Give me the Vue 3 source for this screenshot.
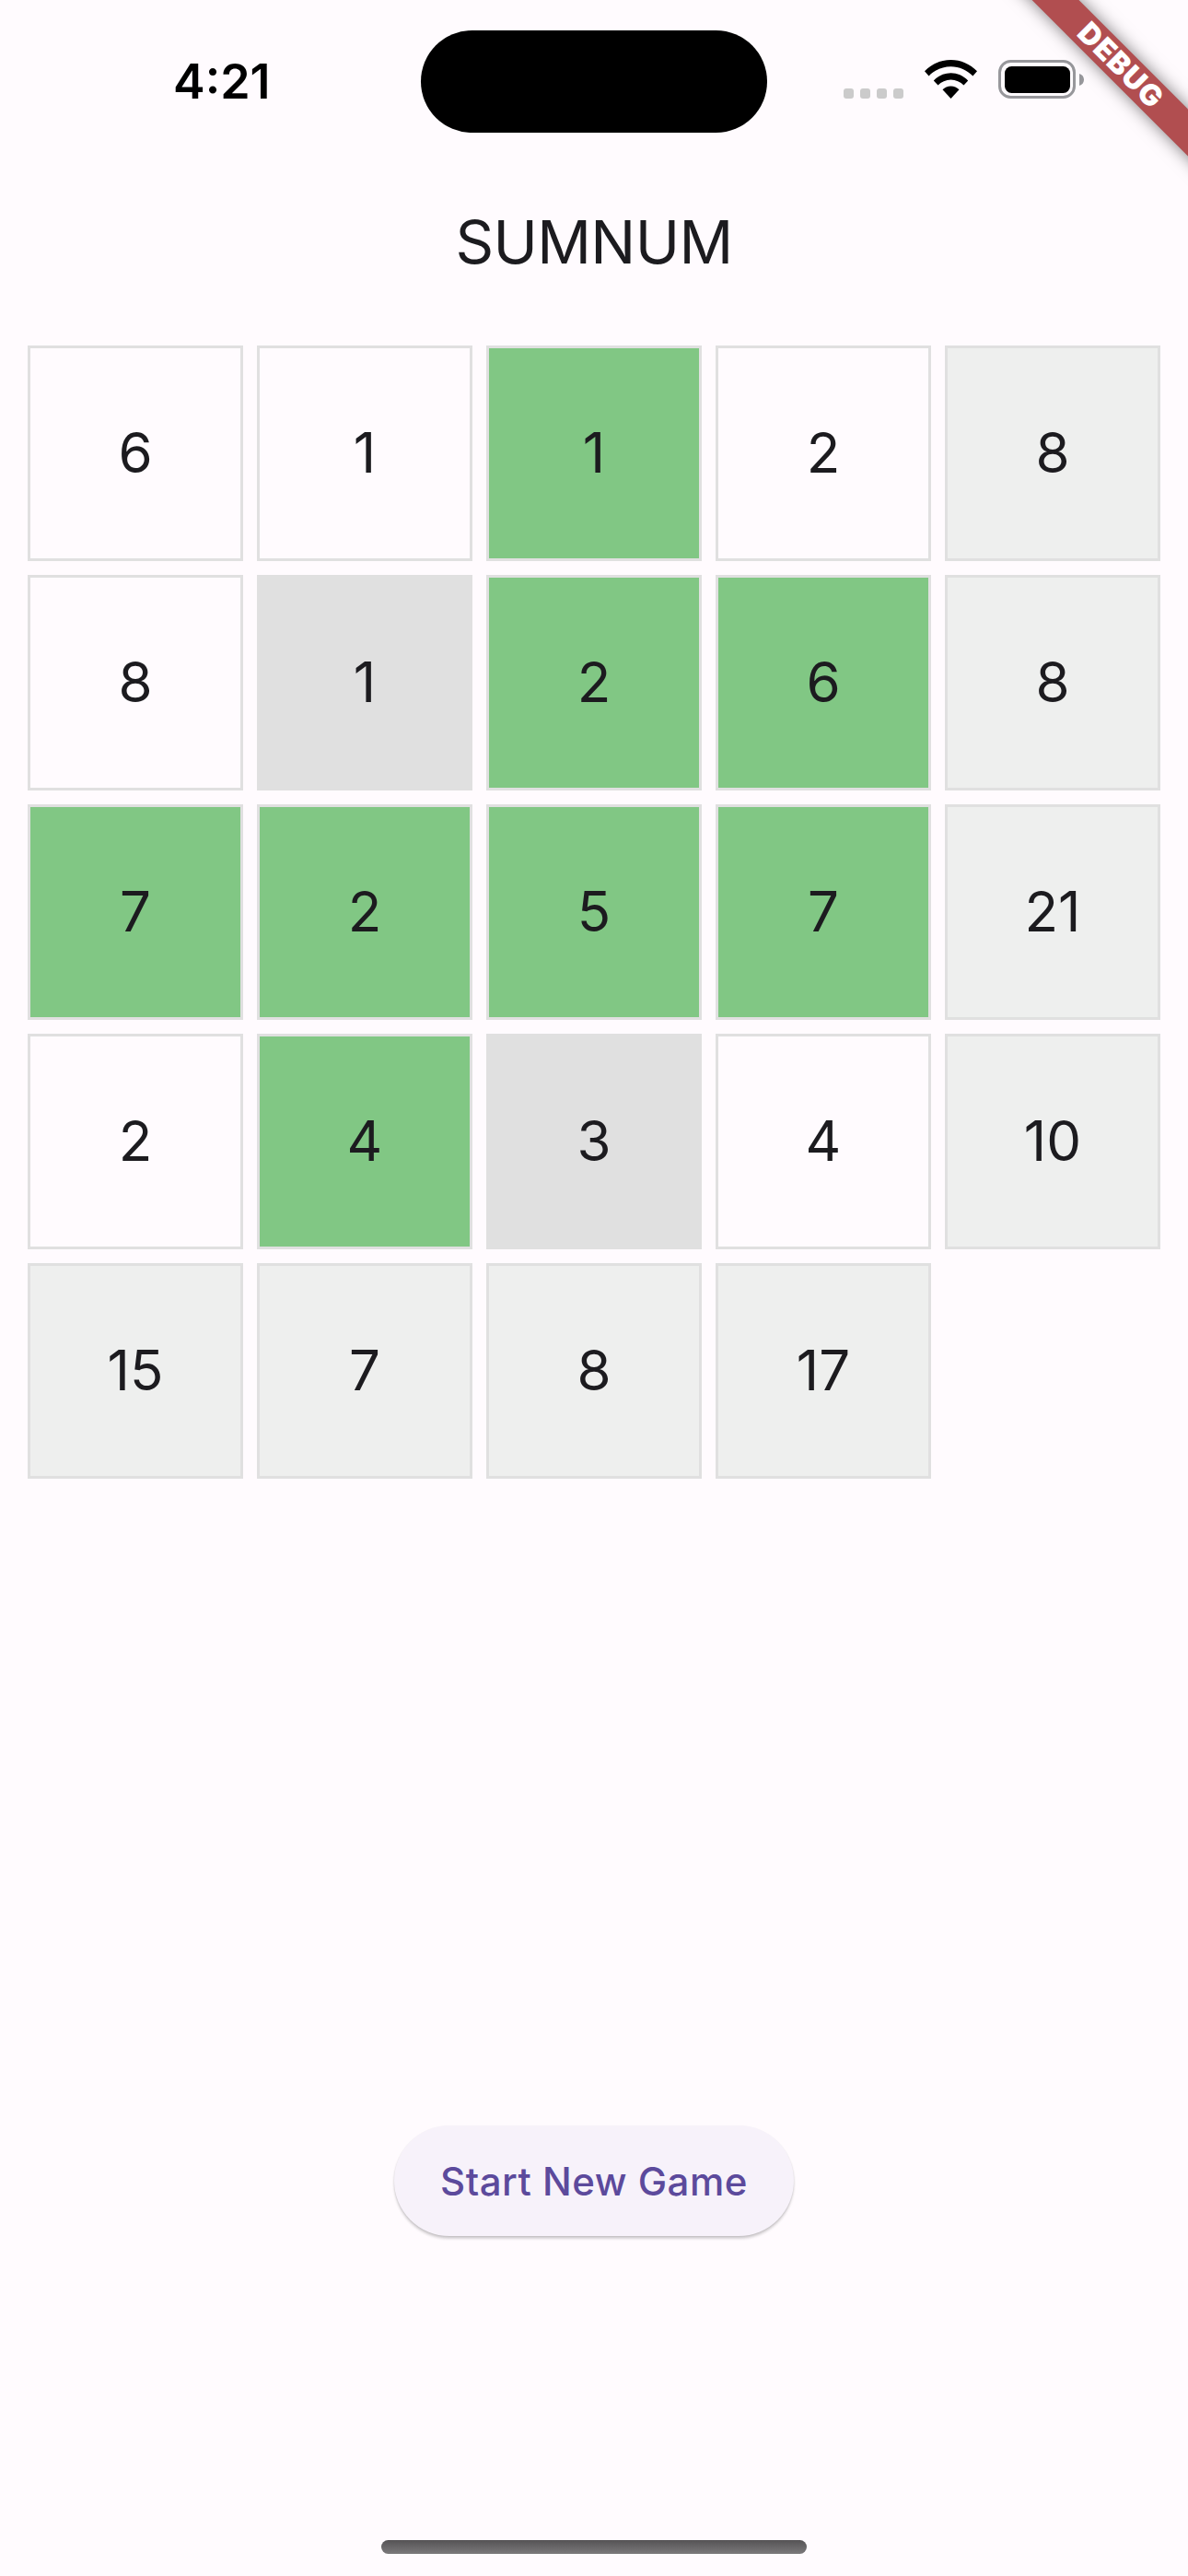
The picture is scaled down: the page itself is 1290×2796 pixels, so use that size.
<script setup>
const rows = [
  [['6', 'w'], ['1', 'w'], ['1', 'g'], ['2', 'w'], ['8', 's']],
  [['8', 'w'], ['1', 'd'], ['2', 'g'], ['6', 'g'], ['8', 's']],
  [['7', 'g'], ['2', 'g'], ['5', 'g'], ['7', 'g'], ['21', 's']],
  [['2', 'w'], ['4', 'g'], ['3', 'd'], ['4', 'w'], ['10', 's']],
  [['15', 's'], ['7', 's'], ['8', 's'], ['17', 's']],
]
const cells = rows.flat()
</script>

<template>
  <div class="page">
    <header class="status">
      <span class="time">4:21</span>
      <div class="island"></div>
      <div class="signal">
        <i></i><i></i><i></i><i></i>
      </div>
      <svg class="wifi" width="57" height="42" viewBox="0 0 57 42">
        <path d="M28.5 0C17.6 0 7.9 4.3 0 12.3L4.6 17.5C11 11 19.3 7.2 28.5 7.2S46 11 52.4 17.5L57 12.3C49.1 4.3 39.4 0 28.5 0Z" fill="#000"/>
        <path d="M28.5 14.2C21.5 14.2 15 17 9.8 22.4L14.5 27.6C18.2 23.7 23.1 21.4 28.5 21.4S38.8 23.7 42.5 27.6L47.2 22.4C42 17 35.5 14.2 28.5 14.2Z" fill="#000"/>
        <path d="M28.5 28.4C25 28.4 21.9 29.7 19.5 32.3L28.5 42L37.5 32.3C35.1 29.7 32 28.4 28.5 28.4Z" fill="#000"/>
      </svg>
      <svg class="battery" width="93" height="42" viewBox="0 0 93 42">
        <rect x="1.5" y="1.5" width="81" height="39" rx="12" fill="none" stroke="#97979b" stroke-width="3"/>
        <rect x="7" y="7" width="71" height="29" rx="7.5" fill="#000"/>
        <path d="M88 15C91 16 93 18 93 21.500S91 27 88 28Z" fill="#97979b"/>
      </svg>
    </header>

    <h1 class="title">SUMNUM</h1>

    <main class="grid">
      <div v-for="(c, i) in cells" :key="i" class="cell" :class="c[1]"><span class="num">{{ c[0] }}</span></div>
    </main>

    <div class="action">
      <button class="new-game" type="button">Start New Game</button>
    </div>

    <div class="home"></div>

    <div class="banner-clip">
      <div class="banner">DEBUG</div>
    </div>
  </div>
</template>

<style>
html, body { margin: 0; background: #fffbfe; }
</style>

<style scoped>
.page {
  position: relative;
  width: 1290px;
  height: 2796px;
  overflow: hidden;
  background: #fffbfe;
  font-family: Inter, "Liberation Sans", sans-serif;
  color: #1c1b1f;
}
.status {
  display: flex;
  height: 144px;
  box-sizing: border-box;
  padding-top: 33px;
}
.time {
  width: 269px;
  margin-left: 188px;
  margin-top: 25px;
  font-size: 52px;
  line-height: 62px;
  height: 62px;
  font-weight: 600;
  color: #000;
  letter-spacing: 0;
}
.island {
  width: 376px;
  height: 111px;
  border-radius: 55.5px;
  background: #000;
}
.signal {
  display: flex;
  gap: 7px;
  margin: 63px 0 0 83px;
  height: 11px;
}
.signal i {
  width: 11px;
  height: 11px;
  border-radius: 3px;
  background: #cbcbcb;
}
.wifi { margin: 32px 0 0 23px; }
.battery { margin: 32px 0 0 23px; }
.title {
  margin: 79px 0 72px;
  height: 80px;
  font-size: 65px;
  line-height: 80px;
  font-weight: 400;
  text-align: center;
  letter-spacing: -0.6px;
}
.grid {
  display: grid;
  grid-template-columns: repeat(5, 234px);
  grid-auto-rows: 234px;
  gap: 15px;
  padding: 0 30px;
}
.cell {
  display: flex;
  align-items: center;
  justify-content: center;
  box-sizing: border-box;
  border: 3px solid #e0e0e0;
  font-size: 60px;
  line-height: 1;
  font-weight: 400;
}
.num { margin-top: -2px; }
.w { background: #fffbfe; }
.g { background: #81c784; }
.d { background: #e0e0e0; }
.s { background: #eeefee; }
.action {
  display: flex;
  justify-content: center;
  margin-top: 702px;
}
.new-game {
  width: 434px;
  height: 120px;
  border: 0;
  border-radius: 60px;
  background: #f7f2fa;
  box-shadow: 0 3px 3px rgba(0, 0, 0, 0.16), 0 1px 2px rgba(0, 0, 0, 0.1);
  color: #5c4a9c;
  font: 500 42px Inter, sans-serif;
  letter-spacing: 0.5px;
  padding: 0;
}
.home {
  width: 462px;
  height: 15px;
  margin: 330px 0 0 414px;
  border-radius: 7.5px;
  background: linear-gradient(#555355, #7b797b);
}
.banner-clip {
  position: absolute;
  top: 0;
  right: 0;
  width: 300px;
  height: 300px;
  overflow: hidden;
  pointer-events: none;
}
.banner {
  position: absolute;
  left: 77px;
  top: 53px;
  width: 300px;
  height: 36px;
  transform: rotate(45deg);
  background: #b14e50;
  box-shadow: 0 0 18px rgba(0, 0, 0, 0.5);
  color: #fff;
  font-size: 32px;
  font-weight: 900;
  line-height: 36px;
  text-align: center;
  letter-spacing: 1px;
}
</style>
